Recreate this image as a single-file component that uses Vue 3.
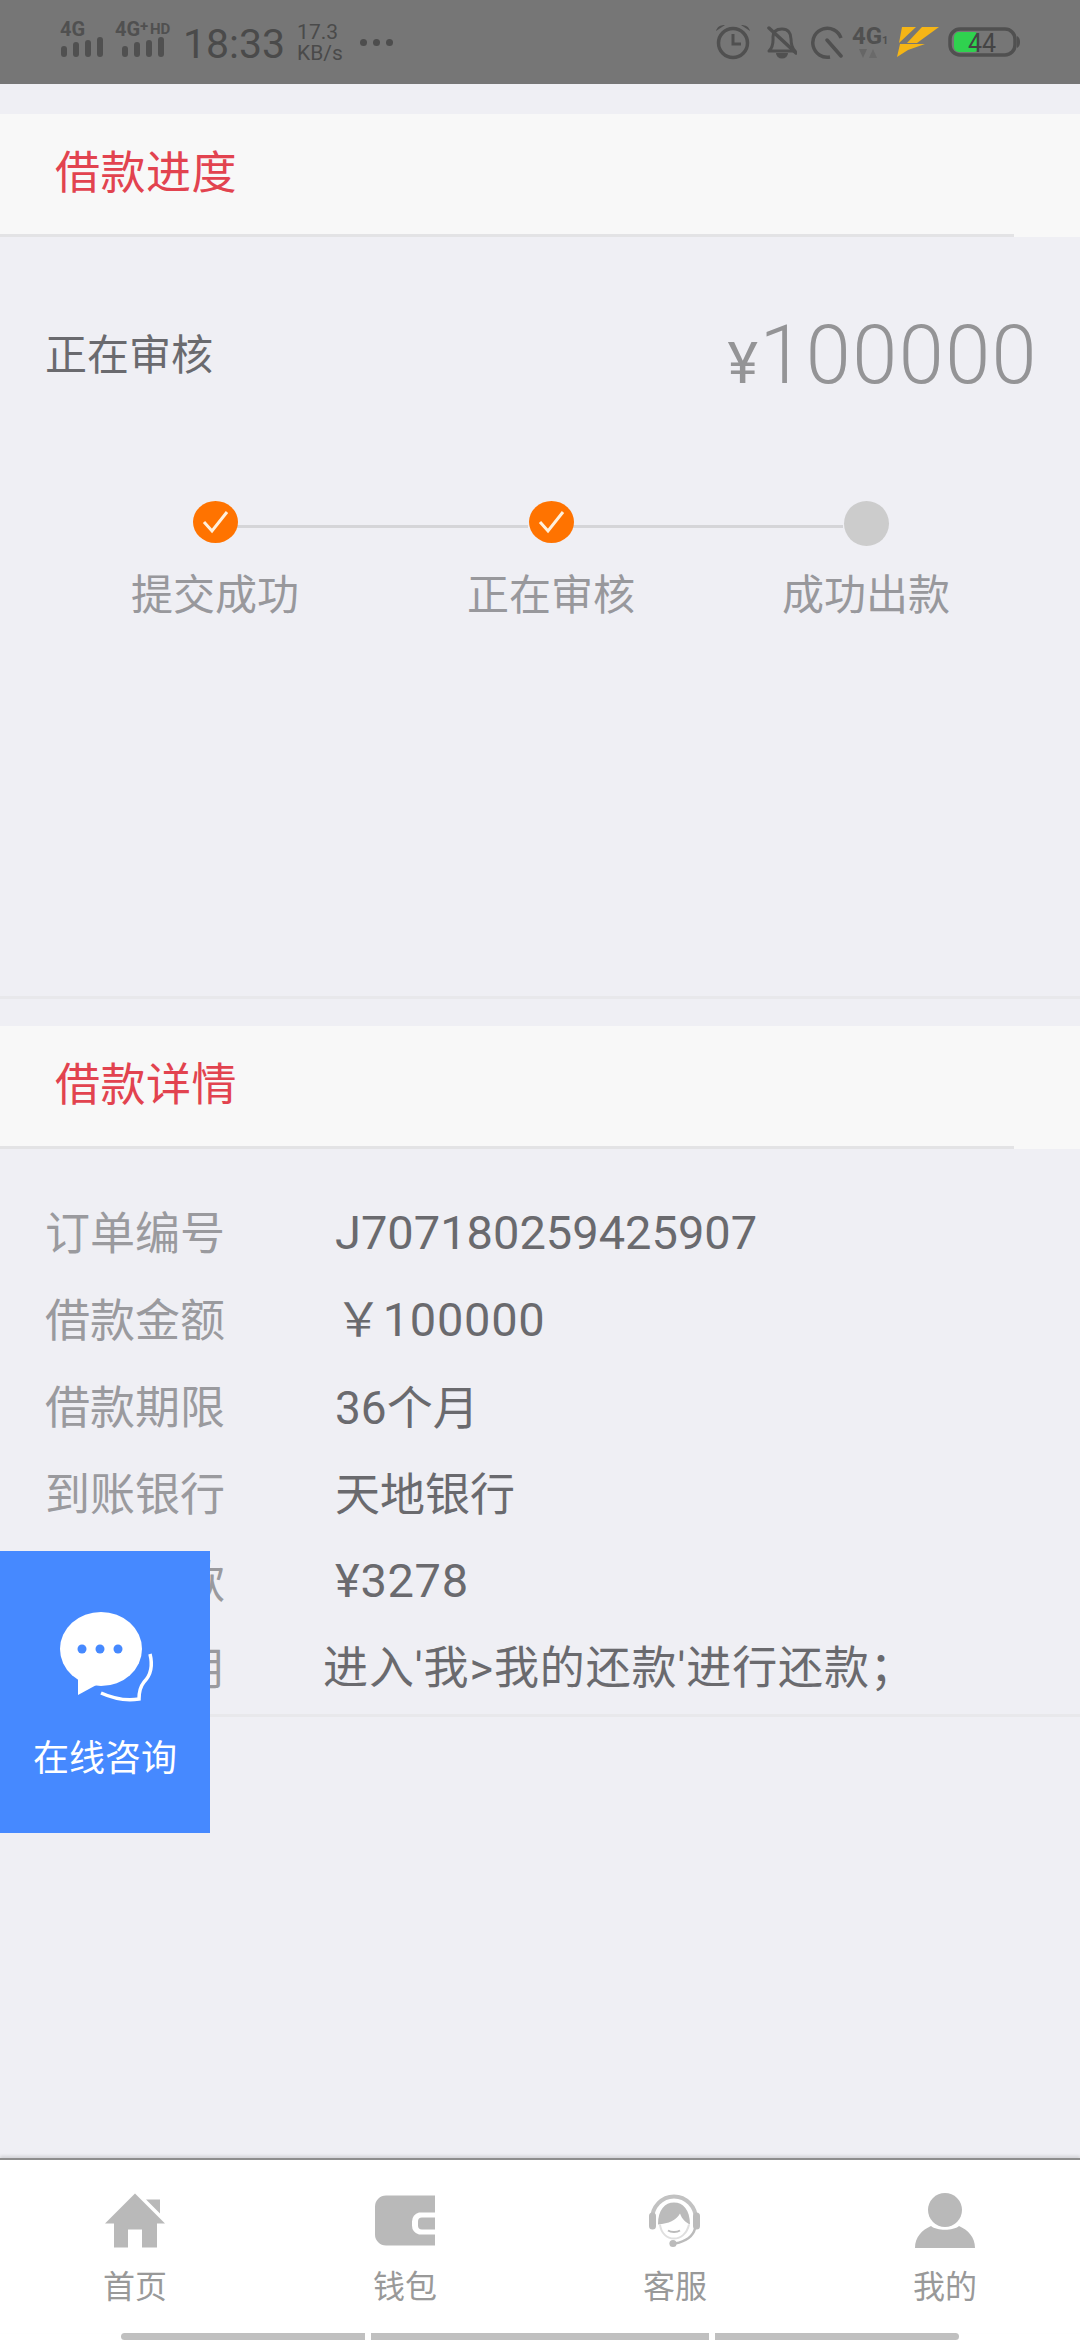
<script setup>
const steps = [
  { label: '提交成功', done: true },
  { label: '正在审核', done: true },
  { label: '成功出款', done: false },
]
const rows = [
  { k: '订单编号', v: 'J707180259425907', cls: 'num' },
  { k: '借款金额', v: '￥100000', cls: 'num wide' },
  { k: '借款期限', v: '36个月', cls: 'mid' },
  { k: '到账银行', v: '天地银行', cls: 'cjk' },
  { k: '每月还款', v: '¥3278', cls: 'num wide' },
  { k: '还款使用', v: "进入'我>我的还款'进行还款；", cls: 'shift' },
]
const bars = [
  { x: 1, y: 46, h: 11 },
  { x: 13, y: 42, h: 15 },
  { x: 25, y: 40, h: 17 },
  { x: 37, y: 37, h: 20 },
]
</script>

<template>
  <div class="page">
    <header class="status">
      <svg class="st" width="45" height="84" viewBox="0 0 45 84">
        <text class="net" x="0" y="36">4G</text>
        <rect v-for="b in bars" :key="b.x" :x="b.x" :y="b.y" width="6" :height="b.h" rx="3" />
      </svg>
      <svg class="st sig2" width="56" height="84" viewBox="0 0 56 84">
        <text class="net" x="0" y="36">4G</text>
        <text class="net small" x="25" y="31">+</text>
        <text class="net small" x="35" y="34">HD</text>
        <rect v-for="b in bars" :key="b.x" :x="b.x + 6" :y="b.y" width="6" :height="b.h" rx="3" />
      </svg>
      <span class="time">18:33</span>
      <span class="speed"><span>17.3</span><span class="unit">KB/s</span></span>
      <span class="more"><i></i><i></i><i></i></span>

      <svg class="st alarm" width="34" height="84" viewBox="0 0 34 84">
        <circle cx="17" cy="43" r="14.5" fill="none" stroke="#505050" stroke-width="3.5" />
        <path d="M17 34V44H25" fill="none" stroke="#505050" stroke-width="3" />
        <path d="M0 31C1 27 4 25 9 25ZM34 31C33 27 30 25 25 25Z" fill="#505050" />
      </svg>
      <svg class="st bell" width="31" height="84" viewBox="0 0 31 84">
        <path d="M3 51C8 46 7 41 7 37C7 31 11 29 16 29C22 29 25 33 25 39C25 45 26 48 29 51Z" fill="none" stroke="#505050" stroke-width="3" stroke-linejoin="round" />
        <path d="M10 53A6 5.5 0 0 0 22 53Z" fill="#505050" />
        <path d="M3 28L30 53" stroke="#505050" stroke-width="3.5" stroke-linecap="round" />
      </svg>
      <svg class="st quiet" width="33" height="84" viewBox="0 0 33 84">
        <path d="M31 38A14.5 14.5 0 1 0 20 57" fill="none" stroke="#505050" stroke-width="3.5" />
        <path d="M17 40L31 56" stroke="#505050" stroke-width="3.5" stroke-linecap="round" />
      </svg>
      <svg class="st g4" width="38" height="84" viewBox="0 0 38 84">
        <text class="net big" x="0" y="44">4G</text>
        <text class="net tiny" x="30" y="44">1</text>
        <path d="M7 49H15L11 58Z" fill="#666" />
        <path d="M17 58H25L21 49Z" fill="#6a6a6a" />
      </svg>
      <svg class="st bolt" width="42" height="84" viewBox="0 0 42 84">
        <path d="M5 27H19L2 43Z" fill="#f5b516" />
        <path d="M25 27H42L20 43H10Z" fill="#f5b516" />
        <path d="M3 44H28L11 50L0 57Z" fill="#f5b516" />
      </svg>
      <svg class="st batt" width="72" height="84" viewBox="0 0 72 84">
        <rect x="2" y="29" width="65" height="26" rx="10" fill="none" stroke="#505050" stroke-width="3.5" />
        <rect x="6" y="32" width="25" height="20" rx="5" fill="#2fd24f" />
        <path d="M69 36C71 37 72 39 72 42C72 45 71 47 69 48Z" fill="#505050" />
        <text class="batt-num" x="20" y="52">44</text>
      </svg>
    </header>

    <main class="main">
      <section>
        <div class="band"><h2 class="band-inner">借款进度</h2></div>
        <div class="progress">
          <div class="summary">
            <span class="sum-label">正在审核</span>
            <span class="sum-amount"><small>¥</small>100000</span>
          </div>
          <div class="steps">
            <div v-for="s in steps" :key="s.label" class="step">
              <span class="dot" :class="{ done: s.done }">
                <svg v-if="s.done" width="45" height="42" viewBox="0 0 45 42">
                  <path d="M11 21L19 30L34 11" fill="none" stroke="#fff0dc" stroke-width="3" />
                </svg>
              </span>
              <span class="step-label">{{ s.label }}</span>
            </div>
          </div>
        </div>
      </section>

      <section class="details">
        <div class="band"><h2 class="band-inner">借款详情</h2></div>
        <div class="rows">
          <div v-for="r in rows" :key="r.k" class="row">
            <span class="key">{{ r.k }}</span>
            <span class="val" :class="r.cls">{{ r.v }}</span>
          </div>
        </div>
      </section>
    </main>

    <aside class="consult">
      <svg width="110" height="100" viewBox="0 0 110 100">
        <ellipse cx="41" cy="38" rx="41" ry="37" fill="#fff" />
        <path d="M18 62L18 84L40 72Z" fill="#fff" />
        <circle cx="22" cy="38" r="4.5" fill="#4689ff" />
        <circle cx="40" cy="38" r="4.5" fill="#4689ff" />
        <circle cx="58" cy="38" r="4.5" fill="#4689ff" />
        <path d="M90 43C93 55 91 64 84 71C80 76 79 80 79 88C66 90 52 87 41 82" fill="none" stroke="#fff" stroke-width="3.5" />
      </svg>
      <span class="consult-label">在线咨询</span>
    </aside>

    <nav class="nav">
      <div class="tab">
        <svg width="60" height="54" viewBox="0 0 60 54">
          <path d="M30 0L60 30H52V54H37V36H23V54H9V30H0Z" fill="#b9b9b9" />
          <path d="M41 6H55V20Z" fill="#b9b9b9" />
        </svg>
        <span>首页</span>
      </div>
      <div class="tab">
        <svg width="60" height="54" viewBox="0 0 60 54">
          <path d="M11 2H60V19H44A9 9 0 0 0 37 28V32A9 9 0 0 0 44 41H60V52H11A11 11 0 0 1 0 41V13A11 11 0 0 1 11 2Z" fill="#b9b9b9" />
          <path d="M47 24H60V36H47A4 4 0 0 1 43 32V28A4 4 0 0 1 47 24Z" fill="#b9b9b9" />
        </svg>
        <span>钱包</span>
      </div>
      <div class="tab">
        <svg width="52" height="54" viewBox="0 0 52 54">
          <path d="M3 26A22 23 0 0 1 47 26" fill="none" stroke="#c2c2c2" stroke-width="4" />
          <rect x="0" y="19" width="7" height="17" rx="3.5" fill="#bbb" />
          <rect x="44" y="19" width="7" height="17" rx="3.5" fill="#bbb" />
          <path d="M9 31C9 16 16 9 25 9C34 9 41 16 41 31C37 29 33 26 31 20C27 27 20 30 9 31Z" fill="#bbb" />
          <path d="M11 31C12 40 18 45 25 45C32 45 38 40 40 31" fill="none" stroke="#dfdfdf" stroke-width="2" />
          <path d="M19 37C22 39 28 39 31 37" fill="none" stroke="#bbb" stroke-width="2" />
          <path d="M46 35C44 43 36 48 26 50" fill="none" stroke="#bbb" stroke-width="2.5" />
          <circle cx="24" cy="50" r="3.6" fill="#bbb" />
        </svg>
        <span>客服</span>
      </div>
      <div class="tab">
        <svg width="60" height="55" viewBox="0 0 60 55">
          <circle cx="30" cy="17" r="17" fill="#b9b9b9" />
          <path d="M0 55C0 44 7 37 16 33C22 38 38 38 44 33C53 37 60 44 60 55Z" fill="#b9b9b9" />
        </svg>
        <span>我的</span>
      </div>
    </nav>
    <div class="gesture"><i></i><i></i><i></i></div>
  </div>
</template>

<style>
html, body { margin: 0; padding: 0; }
</style>

<style scoped>
.page {
  position: relative;
  width: 1080px;
  height: 2340px;
  display: flex;
  flex-direction: column;
  overflow: hidden;
  background: #efeff4;
  font-family: Roboto, "Noto Sans CJK SC", sans-serif;
}
.status {
  height: 84px;
  flex: none;
  display: flex;
  align-items: stretch;
  padding: 0 60px;
  box-sizing: border-box;
  background: #767676;
  color: #4a4a4a;
}
.st { display: block; flex: none; }
.st rect { fill: #505050; }
.net { font: 700 20px Roboto, sans-serif; fill: #505050; }
.net.small { font-size: 15px; }
.net.big { font-size: 24px; }
.net.tiny { font-size: 11px; }
.sig2 { margin-left: 10px; }
.time {
  margin-left: 12px;
  font-size: 41px;
  line-height: 88px;
  font-weight: 400;
}
.speed {
  margin-left: 12px;
  display: flex;
  flex-direction: column;
  justify-content: center;
  padding-top: 2px;
  font-size: 21px;
  line-height: 21px;
  font-weight: 400;
}
.more {
  margin-left: 17px;
  display: flex;
  align-items: center;
  gap: 6px;
}
.more i {
  width: 7px;
  height: 7px;
  border-radius: 50%;
  background: #4d4d4d;
}
.alarm { margin-left: auto; }
.bell { margin-left: 16px; }
.quiet { margin-left: 13px; }
.g4 { margin-left: 9px; }
.bolt { margin-left: 7px; }
.batt { margin-left: 9px; }
.batt-num { font: 400 25px Roboto, sans-serif; fill: #444; }
.batt rect:first-child { fill: none; }
.batt rect:nth-child(2) { fill: #2fd24f; }

.main { flex: 1; min-height: 0; padding-top: 30px; }
.band {
  height: 123px;
  background: #f8f8f8;
}
.band-inner {
  box-sizing: border-box;
  width: 1014px;
  height: 123px;
  margin: 0;
  padding-left: 55px;
  border-bottom: 3px solid #e3e3e5;
  font-size: 45px;
  letter-spacing: 0.5px;
  font-weight: 400;
  line-height: 120px;
  color: #e2434f;
}
.progress {
  box-sizing: border-box;
  height: 762px;
  border-bottom: 3px solid #e8e8eb;
}
.summary {
  display: flex;
  justify-content: space-between;
  align-items: center;
  height: 128px;
  padding: 54px 42px 0 45px;
}
.sum-label {
  font-size: 42px;
  color: #6a6a6e;
  margin-bottom: 7px;
}
.sum-amount {
  font-size: 81px;
  letter-spacing: 1.5px;
  font-weight: 300;
  color: #949496;
}
.sum-amount small { font-size: 58px; font-weight: 400; margin-right: 0; }
.steps {
  display: flex;
  margin-top: 82px;
  padding-left: 130px;
}
.step {
  position: relative;
  width: 170px;
  display: flex;
  flex-direction: column;
  align-items: center;
  flex: none;
}
.step:nth-child(1) { margin-right: 166px; }
.step:nth-child(2) { margin-right: 145px; }
.step:not(:last-child)::after {
  content: "";
  position: absolute;
  left: 107px;
  top: 24px;
  height: 3px;
  background: #d5d5d8;
}
.step:nth-child(1)::after { width: 291px; }
.step:nth-child(2)::after { width: 270px; }
.dot {
  position: relative;
  z-index: 1;
  width: 45px;
  height: 45px;
  border-radius: 50%;
  background: #cccccc;
}
.dot.done {
  height: 42px;
  margin-bottom: 3px;
  background: #ff7300;
}
.dot svg { display: block; }
.step-label {
  margin-top: 20px;
  font-size: 42px;
  line-height: 60px;
  color: #98989c;
  white-space: nowrap;
}
.details { margin-top: 27px; }
.rows {
  box-sizing: border-box;
  height: 568px;
  padding-top: 40px;
  border-bottom: 3px solid #e8e8eb;
}
.row {
  display: flex;
  align-items: flex-start;
  height: 87px;
  padding-left: 45px;
}
.key {
  width: 290px;
  flex: none;
  margin-top: 2px;
  font-size: 45px;
  line-height: 87px;
  color: #9a9a9e;
}
.val {
  font-size: 45px;
  line-height: 87px;
  color: #6a6a6e;
  white-space: nowrap;
}
.val.num { font-size: 47px; }
.val.wide { letter-spacing: 0.7px; }
.val.mid { font-size: 46px; margin-top: 2px; }
.val.cjk { margin-top: 2px; }
.val.shift { margin-left: -12px; margin-top: 1px; letter-spacing: 0.9px; }

.consult {
  position: absolute;
  left: 0;
  top: 1551px;
  width: 210px;
  height: 282px;
  box-sizing: border-box;
  padding: 60px 0 0 60px;
  background: #4689ff;
}
.consult svg { display: block; }
.consult-label {
  position: absolute;
  left: 0;
  right: 0;
  top: 186px;
  text-align: center;
  font-size: 36px;
  line-height: 44px;
  color: #fff;
}
.nav {
  flex: none;
  box-sizing: border-box;
  height: 175px;
  display: grid;
  grid-template-columns: repeat(4, 270px);
  padding-top: 33px;
  border-top: 2px solid #8e8e8e;
  background: #fff;
  box-shadow: 0 -2px 3px rgba(0, 0, 0, 0.12);
  position: relative;
}
.tab {
  display: flex;
  flex-direction: column;
  align-items: center;
}
.tab svg { display: block; height: 55px; }
.tab span {
  margin-top: 17px;
  font-size: 32px;
  line-height: 44px;
  color: #999;
}
.gesture {
  flex: none;
  height: 7px;
  padding-left: 121px;
  display: flex;
  gap: 6px;
  background: #fff;
}
.gesture i { display: block; height: 7px; background: #c0c0c0; }
.gesture i:nth-child(1) { width: 244px; border-radius: 4px 0 0 4px; }
.gesture i:nth-child(2) { width: 338px; }
.gesture i:nth-child(3) { width: 244px; border-radius: 0 4px 4px 0; }
</style>
